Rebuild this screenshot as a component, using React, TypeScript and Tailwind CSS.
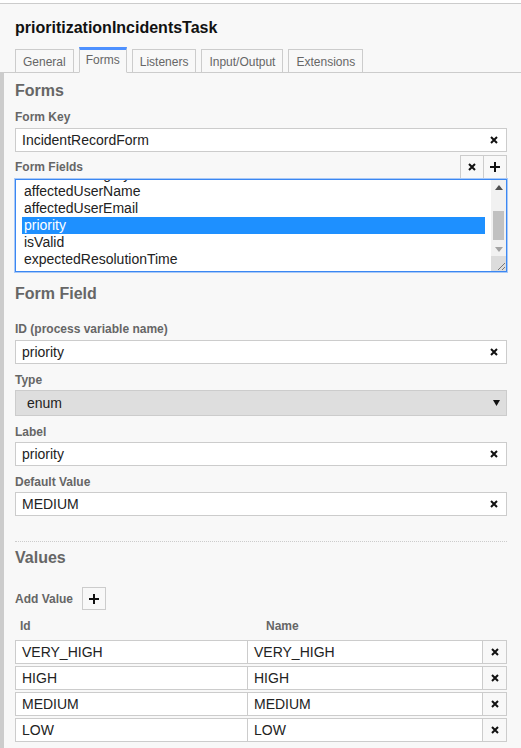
import React from "react";

const ClearIcon: React.FC = () => (
  <svg width="8" height="8" viewBox="0 0 8 8" className="block">
    <path d="M1 1 L7 7 M7 1 L1 7" stroke="#111" strokeWidth="2" />
  </svg>
);

const PlusIcon: React.FC = () => (
  <svg width="10" height="10" viewBox="0 0 10 10" className="block">
    <path d="M5 0 V10 M0 5 H10" stroke="#111" strokeWidth="2" />
  </svg>
);

const tabs = ["General", "Forms", "Listeners", "Input/Output", "Extensions"];

const formFields = [
  "affectedCategory",
  "affectedUserName",
  "affectedUserEmail",
  "priority",
  "isValid",
  "expectedResolutionTime",
];

const enumValues = ["VERY_HIGH", "HIGH", "MEDIUM", "LOW"];

// text input with the small clear button on the right
const TextField: React.FC<{ value: string; className?: string }> = ({
  value,
  className = "",
}) => (
  <div
    className={`flex h-[24px] items-center border border-[#ccc] bg-white pl-[6px] pr-[8px] text-[14px] text-[#222] ${className}`}
  >
    <span className="flex-1 leading-none">{value}</span>
    <ClearIcon />
  </div>
);

const Label: React.FC<{ children: React.ReactNode; className?: string }> = ({
  children,
  className = "",
}) => (
  <div
    className={`h-[16px] text-[12px] leading-[16px] font-bold text-[#666] ${className}`}
  >
    {children}
  </div>
);

const Heading: React.FC<{ children: React.ReactNode; className?: string }> = ({
  children,
  className = "",
}) => (
  <div
    className={`h-[20px] text-[16px] leading-[20px] font-bold text-[#666] ${className}`}
  >
    {children}
  </div>
);

export default function App() {
  return (
    <div className="min-h-screen bg-white font-['Liberation_Sans',Arial,sans-serif]">
      <div className="h-[3px] bg-white" />
      <div className="min-h-[745px] border-t border-[#ccc] bg-[#f8f8f8]">
        {/* Header */}
        <div className="pl-[15px] pt-[14px]">
          <div className="h-[20px] text-[16px] leading-[20px] font-bold text-[#111]">
            prioritizationIncidentsTask
          </div>
        </div>

        {/* Tabs */}
        <div className="mt-[9px] flex h-[26px] items-end gap-[5px] border-b border-[#ccc] pl-[15px]">
          {tabs.map((tab) =>
            tab === "Forms" ? (
              <div
                key={tab}
                className="-mb-px flex h-[26px] items-center border-x border-b border-t-[3px] border-x-[#ccc] border-b-[#f8f8f8] border-t-[#4d90ff] bg-[#f8f8f8] px-[6px] pb-[2px] text-[12px] text-[#666]"
              >
                {tab}
              </div>
            ) : (
              <div
                key={tab}
                className="flex h-[23px] items-center border-x border-t border-[#ccc] px-[7px] pt-[1px] text-[12px] text-[#666]"
              >
                {tab}
              </div>
            )
          )}
        </div>

        {/* Body */}
        <div className="border-l-[4px] border-[#ccc] pb-[8px] pl-[11px] pr-[14px] pt-[8px]">
          <Heading>Forms</Heading>

          <Label className="mt-[8px]">Form Key</Label>
          <TextField value="IncidentRecordForm" className="mt-[3px]" />

          <div className="mt-[3px] flex h-[23px] items-center justify-between">
            <Label>Form Fields</Label>
            <div className="flex">
              <div className="flex h-[23px] w-[24px] items-center justify-center border border-b-0 border-[#ccc]">
                <ClearIcon />
              </div>
              <div className="flex h-[23px] w-[23px] items-center justify-center border border-b-0 border-l-0 border-[#ccc]">
                <PlusIcon />
              </div>
            </div>
          </div>

          {/* Form fields list (focused) */}
          <div className="-mx-px border border-[#a9c9f7]">
            <div className="flex h-[93px] border border-[#3b87f2] bg-white">
              <div className="h-full flex-1 overflow-hidden px-[6px]">
                <div className="-mt-[14px]">
                  {formFields.map((f) => (
                    <div
                      key={f}
                      className={`h-[17px] pl-[2px] text-[14px] leading-[17px] ${
                        f === "priority"
                          ? "bg-[#1e90ff] text-white"
                          : "text-[#222]"
                      }`}
                    >
                      {f}
                    </div>
                  ))}
                </div>
              </div>
              {/* scrollbar */}
              <div className="flex w-[15px] flex-col bg-[#f1f1f1]">
                <div className="flex h-[15px] items-center justify-center">
                  <svg width="8" height="5" viewBox="0 0 8 5">
                    <path d="M0 5 L4 0 L8 5 Z" fill="#505050" />
                  </svg>
                </div>
                <div className="mt-[16px] h-[30px] mx-[2px] bg-[#c1c1c1]" />
                <div className="mt-[2px] flex h-[15px] items-center justify-center">
                  <svg width="8" height="5" viewBox="0 0 8 5">
                    <path d="M0 0 L4 5 L8 0 Z" fill="#a3a3a3" />
                  </svg>
                </div>
                <div className="mt-auto flex h-[15px] items-end justify-end bg-[#dcdcdc] p-[1px]">
                  <svg width="8" height="8" viewBox="0 0 8 8">
                    <path d="M8 1 L1 8 M8 5 L5 8" stroke="#777" strokeWidth="1" />
                  </svg>
                </div>
              </div>
            </div>
          </div>

          <Heading className="mt-[11px]">Form Field</Heading>

          <Label className="mt-[17px]">ID (process variable name)</Label>
          <TextField value="priority" className="mt-[3px]" />

          <Label className="mt-[8px]">Type</Label>
          <div className="mt-[2px] flex h-[26px] items-center border border-[#ccc] bg-[#dedede] pl-[11px] pr-[6px] text-[14px] text-[#222]">
            <span className="flex-1">enum</span>
            <svg width="7" height="6" viewBox="0 0 7 6">
              <path d="M0 0 L7 0 L3.5 6 Z" fill="#111" />
            </svg>
          </div>

          <Label className="mt-[8px]">Label</Label>
          <TextField value="priority" className="mt-[2px]" />

          <Label className="mt-[8px]">Default Value</Label>
          <TextField value="MEDIUM" className="mt-[2px]" />

          <div className="mt-[25px] border-t border-dotted border-[#ccc]" />

          <Heading className="mt-[6px]">Values</Heading>

          <div className="mt-[19px] flex items-center gap-[9px]">
            <Label>Add Value</Label>
            <div className="flex h-[23px] w-[24px] items-center justify-center border border-[#ccc]">
              <PlusIcon />
            </div>
          </div>

          <div className="mt-[8px] flex h-[16px]">
            <Label className="w-[251px] pl-[5px]">Id</Label>
            <Label>Name</Label>
          </div>

          <div className="mt-[6px] flex flex-col gap-[2px]">
            {enumValues.map((v) => (
              <div key={v} className="flex h-[24px]">
                <div className="flex w-[233px] items-center border border-[#ccc] bg-white pl-[6px] text-[14px] text-[#222]">
                  {v}
                </div>
                <div className="flex w-[235px] items-center border border-l-0 border-[#ccc] bg-white pl-[6px] text-[14px] text-[#222]">
                  {v}
                </div>
                <div className="flex flex-1 items-center justify-center border border-l-0 border-[#ccc]">
                  <ClearIcon />
                </div>
              </div>
            ))}
          </div>
        </div>
      </div>
    </div>
  );
}
